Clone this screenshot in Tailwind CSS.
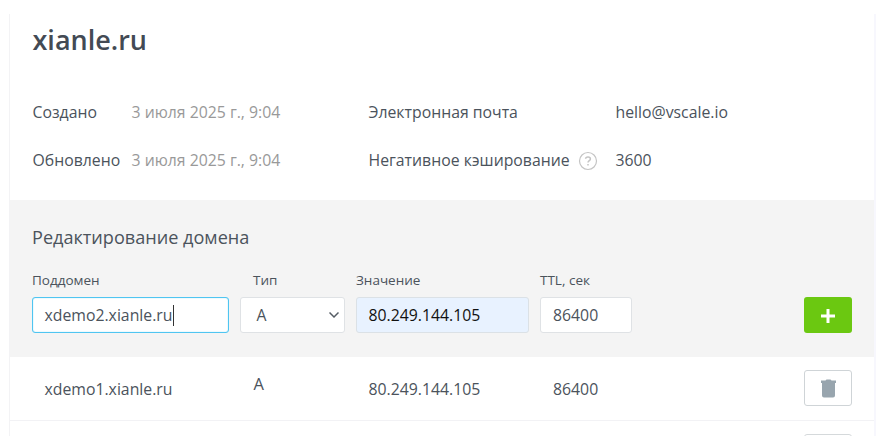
<!DOCTYPE html>
<html lang="ru"><head><meta charset="utf-8"><title>xianle.ru</title>
<script src="https://cdn.jsdelivr.net/npm/@tailwindcss/browser@4"></script></head>
<body class="h-[436px] overflow-hidden bg-white pt-[14px] pl-[9px] font-['Open_Sans','Noto_Sans',sans-serif] text-[15.8px] leading-6 text-[#4b535c]">
<main class="h-[422px] w-[867px] overflow-hidden border-l border-r-2 border-l-[#f3f3f5] border-r-[#f7f7fd]">
  <header class="h-[186px] pl-[22.5px] pt-[8px]">
    <h1 class="text-[27px] leading-[36px] font-semibold text-[#434a54]">xianle.ru</h1>
    <div class="mt-[42px] grid grid-cols-[99px_237px_247px_1fr] gap-y-[24px] whitespace-nowrap">
      <span>Создано</span><span class="text-[#999]">3 июля 2025 г., 9:04</span><span>Электронная почта</span><span>hello@vscale.io</span>
      <span>Обновлено</span><span class="text-[#999]">3 июля 2025 г., 9:04</span>
      <span class="flex items-center gap-[8px]">Негативное кэширование
        <svg class="mt-[2px] size-[20px]" viewBox="0 0 20 20" fill="none" stroke="#c4c4c4"><circle cx="10" cy="10" r="8.500" stroke-width="1.200"/><path d="M7.600 7.800C7.700 5.300 12.400 5.300 12.400 7.900C12.400 9.500 10 9.700 10 11.600M10 13v1.500" stroke-width="1.500"/></svg>
      </span><span>3600</span>
    </div>
  </header>
  <section class="h-[157px] bg-[#f4f4f4] pl-[22px] pt-[23px]">
    <h2 class="text-[18.1px] leading-[28px]">Редактирование домена</h2>
    <div class="mt-[19px] flex items-end pr-[22px]">
      <label class="w-[208px] text-[13.5px] leading-5"><span class="block">Поддомен</span>
        <span class="mt-[7px] flex h-[36px] w-[197px] items-center rounded-[3px] border border-[#4fc5f1] bg-white pl-[11.5px] text-[15.8px] shadow-[inset_0_0_1px_#4fc5f1]">xdemo2.xianle.ru<i class="h-[21px] w-px bg-[#333]"></i></span></label>
      <label class="w-[116px] text-[13.5px] leading-5"><span class="block pl-[13px]">Тип</span>
        <span class="mt-[7px] flex h-[36px] w-[105px] items-center justify-between rounded-[3px] border border-[#dfe2e5] bg-white pr-[5px] pl-[15.5px] text-[15.8px]">A
          <svg class="size-[10px]" viewBox="0 0 10 10" fill="none" stroke="#555c64" stroke-width="1.500"><path d="M.5 2.500 5 7l4.500-4.500"/></svg></span></label>
      <label class="w-[184px] text-[13.5px] leading-5"><span class="block">Значение</span>
        <span class="mt-[7px] flex h-[36px] w-[173px] items-center rounded-[3px] border border-[#dbe1e6] bg-[#e8f2ff] pl-[11.5px] text-[15.8px] text-[#111]">80.249.144.105</span></label>
      <label class="text-[13.5px] leading-5"><span class="block">TTL, сек</span>
        <span class="mt-[7px] flex h-[36px] w-[92px] items-center rounded-[3px] border border-[#dfe2e5] bg-white pl-3 text-[15.8px]">86400</span></label>
      <button class="ml-auto flex h-[36px] w-12 items-center justify-center rounded-[3px] bg-[#6bc811]"><svg class="mt-[2px] size-[14px]" viewBox="0 0 14 14" stroke="white" stroke-width="3"><path d="M7 0v14M0 7h14"/></svg></button>
    </div>
  </section>
  <div class="flex h-16 items-center border-b border-[#f2f2f5] pl-[34.5px] pr-[22px]">
    <span class="w-[209px]">xdemo1.xianle.ru</span><span class="mb-[9px] w-[115px] text-[16.5px]">A</span><span class="w-[184.5px]">80.249.144.105</span><span>86400</span>
    <button class="mb-px ml-auto flex h-[36px] w-12 items-center justify-center rounded-[3px] border border-[#cfd4d7]"><svg class="mt-px h-[19px] w-[15px]" viewBox="0 0 15 19" fill="#98a5ae"><path d="M0 1.500h4.500L5.500.500h4L10.500 1.500H15V4H0zM1 4h13v12.500a2 2 0 0 1-2 2H3a2 2 0 0 1-2-2z"/></svg></button>
  </div>
  <div class="flex justify-end pt-[13px] pr-[22px]"><button class="h-[37px] w-12 rounded-[3px] border border-[#d5d9db]"></button></div>
</main></body></html>
